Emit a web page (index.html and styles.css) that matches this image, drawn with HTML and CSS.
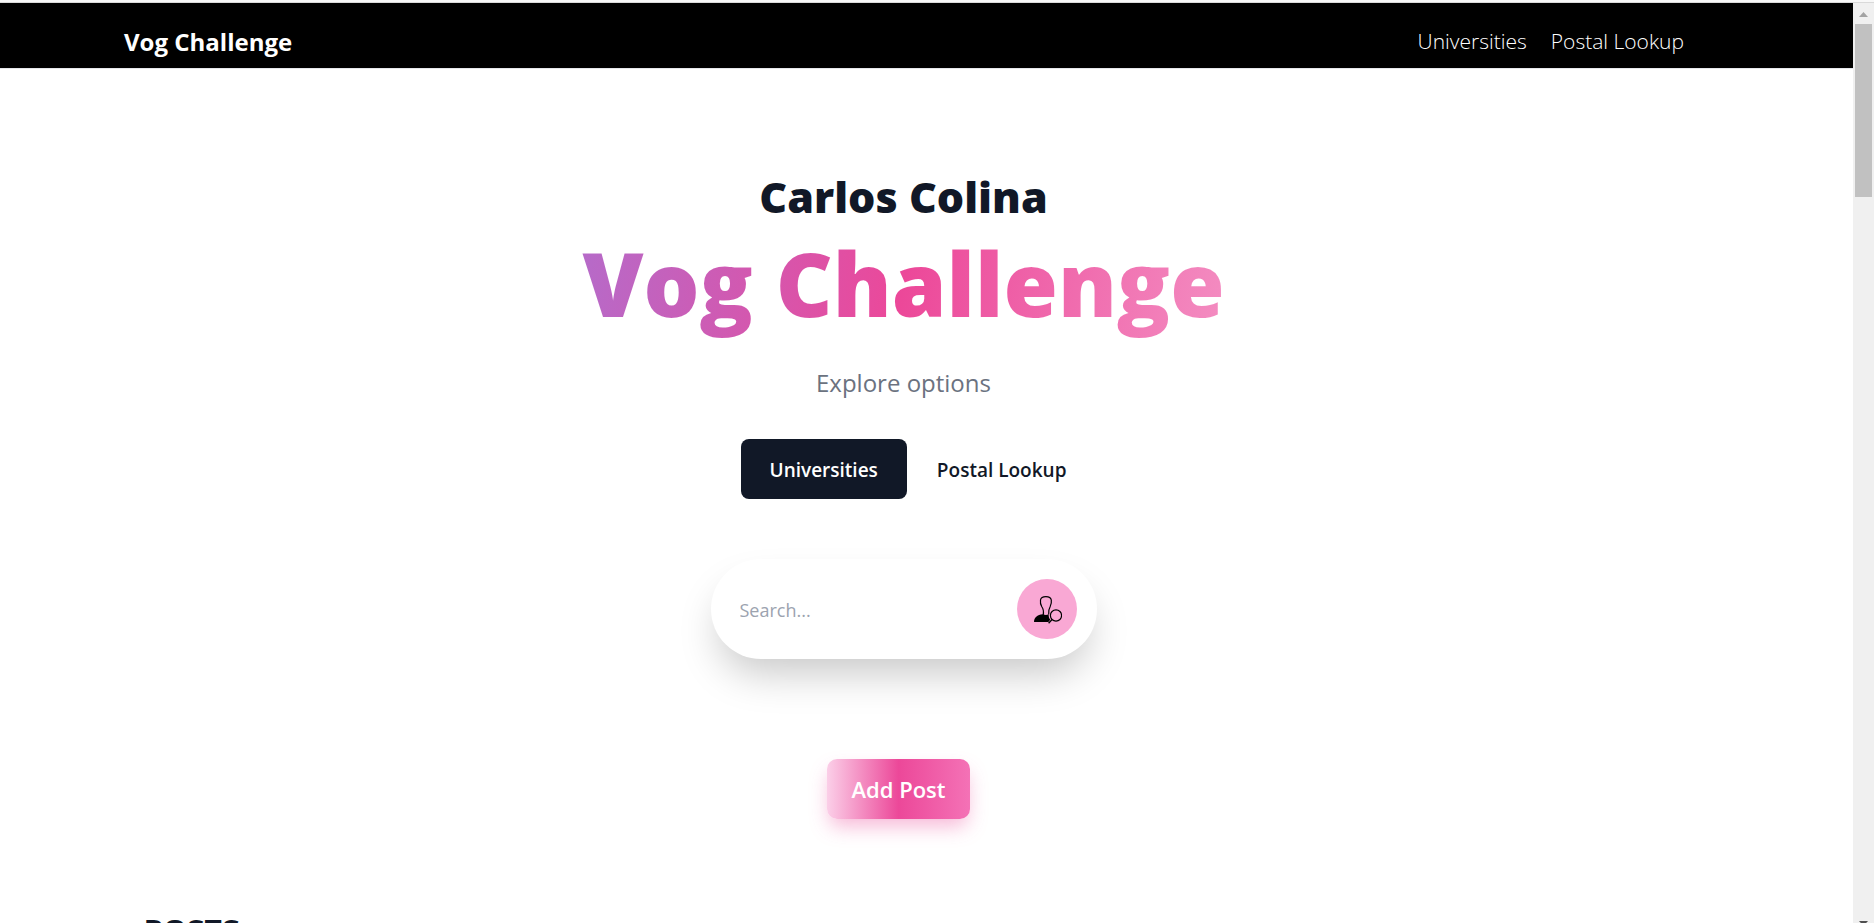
FILE: index.html
```html
<!DOCTYPE html>
<html lang="en">
<head>
<meta charset="utf-8">
<title>Vog Challenge</title>
<link rel="stylesheet" href="styles.css">
</head>
<body>
<div class="window">
  <div class="page">
    <header class="header">
      <a class="brand" href="#">Vog Challenge</a>
      <nav class="nav">
        <a href="#">Universities</a>
        <a href="#">Postal Lookup</a>
      </nav>
    </header>
    <main>
      <section class="hero">
        <h2 class="author">Carlos Colina</h2>
        <h1 class="title">Vog Challenge</h1>
        <p class="lead">Explore options</p>
        <div class="tabs">
          <a class="tab tab-active" href="#">Universities</a>
          <a class="tab" href="#">Postal Lookup</a>
        </div>
        <form class="search">
          <input class="search-input" type="text" placeholder="Search..." aria-label="Search">
          <button class="search-button" type="button" aria-label="Search">
            <svg width="30" height="30" viewBox="0 0 30 30" fill="none" stroke="#000">
              <path d="M11.200 21C11.800 18 11.500 15 9.700 12.500C8.300 10 8.200 8 8.500 6C8.900 3.500 10.700 2.600 13.900 2.600S18.900 3.500 19.300 6C19.600 8 19.400 10 18.200 12.500C16.800 15 16.300 17.500 16.700 20.500" stroke-width="1.200"/>
              <path d="M2 28C2 23.500 5 21 11 20.300C13 21.200 15 21.200 16.600 20.300C16.600 23 17.300 24.800 18.300 25.700L16.300 28Z" fill="#000" stroke="none"/>
              <circle cx="24" cy="21.500" r="5.600" stroke-width="1.200"/>
              <path d="M20.100 25.500L16.600 29.300" stroke-width="1.300"/>
            </svg>
          </button>
        </form>
        <button class="add-post" type="button">Add Post</button>
      </section>
      <section class="posts">
        <h2 class="posts-title">POSTS</h2>
      </section>
    </main>
  </div>
  <div class="scrollbar" aria-hidden="true">
    <svg width="21" height="21" viewBox="0 0 21 21"><path d="M6 14L10.500 9L15 14Z" fill="#a3a3a3"/></svg>
    <div class="thumb"></div>
    <svg class="arrow-down" width="21" height="21" viewBox="0 0 21 21"><path d="M6 19H15L10.500 24Z" fill="#505050"/></svg>
  </div>
</div>
</body>
</html>
```
FILE: styles.css
```css
* { box-sizing: border-box; }
body {
  margin: 0;
  background: #fff;
  color: #111827;
  font-family: "Open Sans", "Noto Sans", sans-serif;
}
a { color: inherit; text-decoration: none; }
h1, h2, p { margin: 0; }
button, input { font: inherit; border: 0; padding: 0; }
.window {
  height: calc(100vh - 2px);
  overflow: hidden;
  display: flex;
  border-top: 1px solid #d9d9d9;
  box-shadow: 0 -2px #f8f8f8;
  margin-top: 2px;
}
.page { flex: 1; min-width: 0; }
.header {
  display: flex;
  justify-content: space-between;
  height: 66px;
  padding: 16px 169px 0 124px;
  background: #000;
  border-bottom: 1px solid #e5e7eb;
  color: #fff;
}
.brand { font-size: 24px; line-height: 46px; font-weight: 700; }
.nav { display: flex; gap: 24px; font-size: 21px; line-height: 44px; font-weight: 300; }
.hero {
  display: flex;
  flex-direction: column;
  align-items: center;
  padding: 104px 46px 0 0;
}
.author { font-size: 43px; line-height: 48px; font-weight: 800; }
.title {
  width: 100%;
  max-width: 1280px;
  text-align: center;
  font-size: 88px;
  line-height: 124px;
  font-weight: 800;
  background: linear-gradient(100deg, #818cf8, #ec4899, #fbcfe8);
  -webkit-background-clip: text;
  background-clip: text;
  color: transparent;
}
.lead { font-size: 24px; line-height: 32px; margin-top: 22px; color: #6b7280; }
.tabs { display: flex; gap: 30px; margin-top: 40px; }
.tab { font-size: 19px; font-weight: 600; line-height: 58px; padding-top: 2px; }
.tab-active { padding: 2px 29px 0; border-radius: 8px; background: #111827; color: #fff; }
.search {
  display: flex;
  align-items: center;
  width: 386px;
  margin-top: 60px;
  padding: 20px 20px 20px 29px;
  border-radius: 50px;
  box-shadow: 0 22px 40px -8px rgba(0, 0, 0, 0.22);
}
.search-input { flex: 1; min-width: 0; padding-top: 2px; font-size: 18px; background: none; outline: none; }
.search-input::placeholder { color: #9ca3af; opacity: 1; }
.search-button {
  display: grid;
  place-items: center;
  width: 60px;
  height: 60px;
  border-radius: 50%;
  background: #f9a8d4;
}
.add-post {
  width: 143px;
  height: 60px;
  margin: 100px 10px 0 0;
  border-radius: 10px;
  background: linear-gradient(to right, #fbcfe8, #ec4899, #f472b6);
  box-shadow: 0 10px 20px -3px rgba(236, 72, 153, 0.4);
  color: #fff;
  font-size: 22px;
  font-weight: 600;
}
.posts { padding: 92px 144px 0; }
.posts-title { font-size: 30px; line-height: 40px; font-weight: 800; }
.scrollbar { width: 21px; background: #f0f0f0; display: flex; flex-direction: column; }
.scrollbar svg { flex: none; display: block; }
.thumb { height: 173px; margin: 0 2px; background: #c1c1c1; }
.arrow-down { margin-top: auto; overflow: visible; }
```
